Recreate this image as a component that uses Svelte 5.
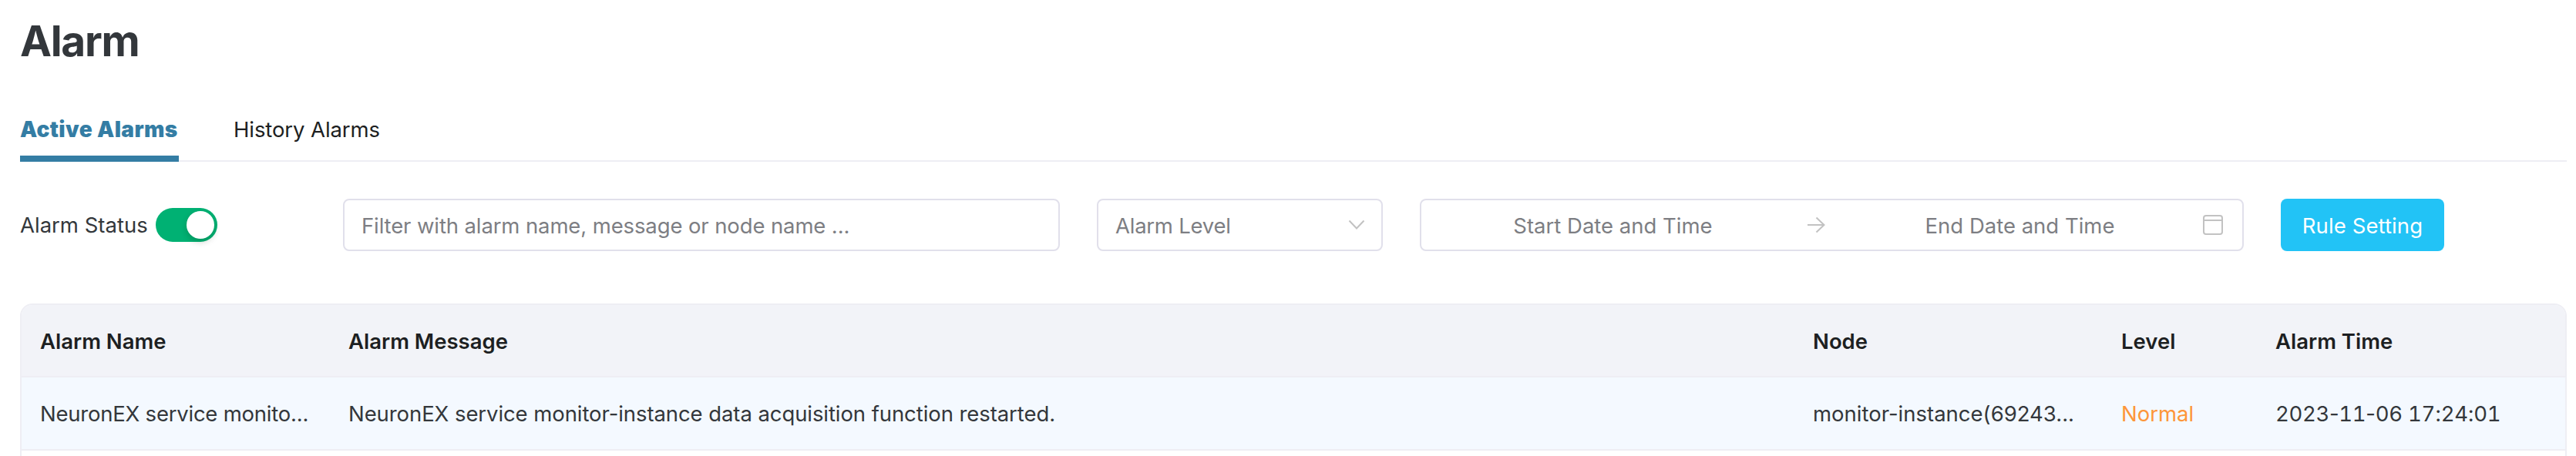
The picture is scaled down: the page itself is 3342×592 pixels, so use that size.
<script>
  const columns = ['Alarm Name', 'Alarm Message', 'Node', 'Level', 'Alarm Time'];
  const rows = [
    {
      name: 'NeuronEX service monito...',
      message: 'NeuronEX service monitor-instance data acquisition function restarted.',
      node: 'monitor-instance(69243...',
      level: 'Normal',
      time: '2023-11-06 17:24:01'
    }
  ];
  let enabled = $state(true);
  const parts = (time) => time.match(/\d+|\D/g);
</script>

<main>
  <h1>Alarm</h1>

  <nav>
    <a class="tab active" href="#active">Active Alarms</a>
    <a class="tab" href="#history">History Alarms</a>
  </nav>

  <section class="filters">
    <div class="status">
      <span class="status-label">Alarm Status</span>
      <button class="switch" class:on={enabled} aria-label="Alarm Status" onclick={() => (enabled = !enabled)}><i></i></button>
    </div>
    <div class="field search"><span>Filter with alarm name, message or node name ...</span></div>
    <div class="field select">
      <span>Alarm Level</span>
      <svg width="24" height="24" viewBox="0 0 24 24"><path d="M2.500 6.500 12 16.500 21.500 6.500" /></svg>
    </div>
    <div class="field range">
      <span class="start">Start Date and Time</span>
      <svg width="28" height="28" viewBox="0 0 28 28"><path d="M3 14H24.500M14.500 4.500 24.500 14 14.500 23.500" /></svg>
      <span class="end">End Date and Time</span>
      <svg width="28" height="28" viewBox="0 0 28 28"><rect x="2" y="2" width="24" height="24" rx="3" /><path d="M2 8h24" /></svg>
    </div>
    <button class="primary">Rule Setting</button>
  </section>

  <section class="table">
    <div class="row head">
      {#each columns as column}<div class="cell">{column}</div>{/each}
    </div>
    {#each rows as row}
      <div class="row body">
        <div class="cell name">{row.name}</div>
        <div class="cell message">{row.message}</div>
        <div class="cell">{row.node}</div>
        <div class="cell level">{row.level}</div>
        <div class="cell time">{#each parts(row.time) as part}<span class:digits={/\d/.test(part)}>{part}</span>{/each}</div>
      </div>
    {/each}
  </section>
</main>

<style>
  :global(body) { margin: 0; background: #fff; overflow: hidden; }
  main {
    box-sizing: border-box;
    height: 592px;
    overflow: hidden;
    padding: 18px 12px 0 26px;
    font: 400 27.5px/40px Inter, sans-serif;
    color: #33373b;
    white-space: nowrap;
  }
  h1 { margin: 0; font-size: 55px; line-height: 70px; font-weight: 700; letter-spacing: -1.3px; color: #33373b; }
  nav { display: flex; gap: 71px; height: 76px; margin-top: 44px; border-bottom: 2px solid #eeeef4; }
  .tab { box-sizing: border-box; height: 78px; padding-top: 16px; color: #1d1f22; text-decoration: none; letter-spacing: -.1px; }
  .tab.active { width: 206px; border-bottom: 8px solid #347da4; color: #347da4; font-size: 28px; font-weight: 900; letter-spacing: .4px; }
  .filters { display: flex; align-items: center; height: 68px; margin-top: 48px; }
  .status { display: flex; align-items: center; width: 419px; }
  .status-label { width: 176px; }
  .switch { width: 80px; height: 44px; border: 0; border-radius: 22px; padding: 4px; background: #b9bbc2; display: flex; }
  .switch i { width: 36px; height: 36px; border-radius: 50%; background: #fff; box-shadow: 0 4px 8px rgba(0, 35, 11, .2); }
  .switch.on { background: #00b173; justify-content: flex-end; }
  .field { box-sizing: border-box; height: 68px; border: 2px solid #e1e0eb; border-radius: 8px; display: flex; align-items: center; color: #7d7e83; }
  .field span { position: relative; top: 1px; }
  .field svg { fill: none; stroke: #c2c2c2; stroke-width: 2; flex: none; }
  .search { width: 930px; padding-left: 22px; margin-right: 48px; letter-spacing: -.12px; }
  .select { width: 371px; padding: 0 20px 0 22px; justify-content: space-between; margin-right: 48px; letter-spacing: -.25px; }
  .range { width: 1069px; margin-right: 48px; }
  .start { width: 497px; margin-right: 1px; text-align: center; }
  .end { box-sizing: border-box; width: 487px; padding-left: 14px; text-align: center; }
  .primary { width: 212px; height: 68px; border: 0; border-radius: 8px; padding: 2px 0 0; background: #22c3f6; color: #fff; font: inherit; letter-spacing: .1px; }
  .table { box-sizing: border-box; height: 300px; margin-top: 68px; border: 2px solid #eeeef4; border-radius: 16px 16px 0 0; overflow: hidden; }
  .row { display: grid; grid-template-columns: 400px 1900px 400px 200px 1fr; align-items: center; box-sizing: border-box; border-bottom: 2px solid #eeeef4; }
  .head { height: 94px; padding-top: 2px; background: #f2f3f8; color: #1d1f22; font-weight: 600; }
  .body { height: 95px; background: #f4f9ff; }
  .cell { padding-left: 24px; }
  .name { letter-spacing: -.23px; }
  .message { letter-spacing: -.08px; }
  .level { color: #fd9639; }
  .time { letter-spacing: -.33px; }
  .digits { font-variant-numeric: tabular-nums; }
</style>
